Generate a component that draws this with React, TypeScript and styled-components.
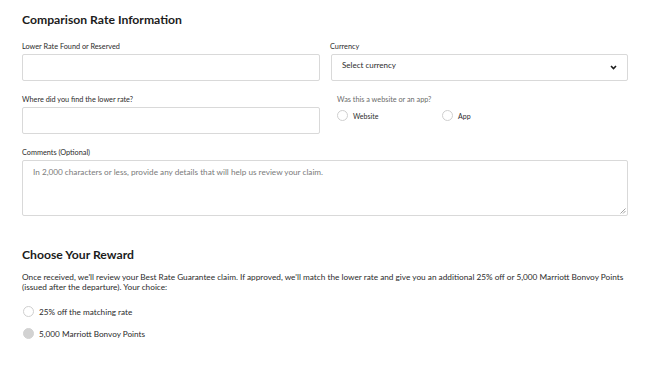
import React from "react";
import styled, { createGlobalStyle } from "styled-components";

const Global = createGlobalStyle`
  html, body { margin: 0; padding: 0; background: #fff; }
  body { font-family: Lato, "Liberation Sans", sans-serif; color: #1c1c1c; }
  * { box-sizing: border-box; }
`;

const Page = styled.div`
  width: 646px;
  padding: 12px 18px 0 22px;
`;

const Heading = styled.h2`
  margin: 0;
  font-size: 12.2px;
  line-height: 16px;
  font-weight: 700;
  color: #1c1c1c;
`;

const Grid = styled.div`
  display: grid;
  grid-template-columns: 298px 298px;
  column-gap: 10px;
  row-gap: 14px;
  margin-top: 14px;
`;

const Field = styled.div<{ $indent?: number }>`
  display: flex;
  flex-direction: column;
  padding-left: ${(p) => p.$indent ?? 0}px;
`;

const Label = styled.label<{ $muted?: boolean }>`
  font-size: 7.3px;
  line-height: 9px;
  color: ${(p) => (p.$muted ? "#6b6b6b" : "#2b2b2b")};
  margin-bottom: 3px;
`;

const Input = styled.div`
  height: 27px;
  border: 1px solid #d9d9d9;
  border-radius: 2px;
  background: #fff;
`;

const Select = styled.div`
  height: 27px;
  border: 1px solid #d9d9d9;
  border-radius: 2px;
  display: flex;
  align-items: center;
  justify-content: space-between;
  padding: 0 10px 0 10px;
  margin-left: 1px;
  font-size: 8px;
  color: #2b2b2b;
`;

const SelectText = styled.span`
  margin-top: -6px;
`;

const RadioRow = styled.div`
  display: flex;
  align-items: center;
  margin-top: 3px;
`;

const RadioOption = styled.div<{ $width?: number; $size?: number }>`
  display: flex;
  align-items: center;
  width: ${(p) => (p.$width ? `${p.$width}px` : "auto")};
  font-size: ${(p) => p.$size ?? 7}px;
  color: #2b2b2b;
`;

const Circle = styled.span<{ $filled?: boolean }>`
  width: 11px;
  height: 11px;
  border-radius: 50%;
  border: 1px solid ${(p) => (p.$filled ? "#d2d2d2" : "#cfcfcf")};
  background: ${(p) => (p.$filled ? "#d2d2d2" : "#fff")};
  margin-right: 5px;
  flex: none;
`;

const Wide = styled.div`
  grid-column: 1 / span 2;
  display: flex;
  flex-direction: column;
`;

const TextArea = styled.div`
  position: relative;
  height: 56px;
  border: 1px solid #d9d9d9;
  border-radius: 2px;
  padding: 6px 10px;
  font-size: 8.2px;
  color: #7a7a7a;
`;

const Grip = styled.svg`
  position: absolute;
  right: 1px;
  bottom: 1px;
`;

const Section = styled.div`
  margin-top: 31px;
`;

const Paragraph = styled.p`
  margin: 9px 0 0;
  font-size: 8.25px;
  line-height: 10px;
  color: #2b2b2b;
  width: 606px;
`;

const ChoiceList = styled.div`
  display: flex;
  flex-direction: column;
  gap: 11px;
  margin-top: 14px;
  padding-left: 1px;
`;

function Chevron() {
  return (
    <svg width="7" height="5" viewBox="0 0 7 5">
      <path d="M1 1 L3.5 3.5 L6 1" stroke="#1c1c1c" strokeWidth="1.6" fill="none" />
    </svg>
  );
}

export default function App() {
  return (
    <Page>
      <Global />
      <Heading>Comparison Rate Information</Heading>
      <Grid>
        <Field>
          <Label>Lower Rate Found or Reserved</Label>
          <Input />
        </Field>
        <Field>
          <Label>Currency</Label>
          <Select>
            <SelectText>Select currency</SelectText>
            <Chevron />
          </Select>
        </Field>
        <Field>
          <Label>Where did you find the lower rate?</Label>
          <Input />
        </Field>
        <Field $indent={7}>
          <Label $muted>Was this a website or an app?</Label>
          <RadioRow>
            <RadioOption $width={105}>
              <Circle />
              Website
            </RadioOption>
            <RadioOption>
              <Circle />
              App
            </RadioOption>
          </RadioRow>
        </Field>
        <Wide>
          <Label>Comments (Optional)</Label>
          <TextArea>
            In 2,000 characters or less, provide any details that will help us review your claim.
            <Grip width="6" height="6" viewBox="0 0 6 6">
              <path d="M5.5 0.5 L0.5 5.5 M5.5 3 L3 5.5" stroke="#8a8a8a" strokeWidth="0.8" />
            </Grip>
          </TextArea>
        </Wide>
      </Grid>
      <Section>
        <Heading>Choose Your Reward</Heading>
        <Paragraph>
          Once received, we'll review your Best Rate Guarantee claim. If approved, we'll match the lower
          rate and give you an additional 25% off or 5,000 Marriott Bonvoy Points (issued after the
          departure). Your choice:
        </Paragraph>
        <ChoiceList>
          <RadioOption $size={8.2}>
            <Circle />
            25% off the matching rate
          </RadioOption>
          <RadioOption $size={8.2}>
            <Circle $filled />
            5,000 Marriott Bonvoy Points
          </RadioOption>
        </ChoiceList>
      </Section>
    </Page>
  );
}
